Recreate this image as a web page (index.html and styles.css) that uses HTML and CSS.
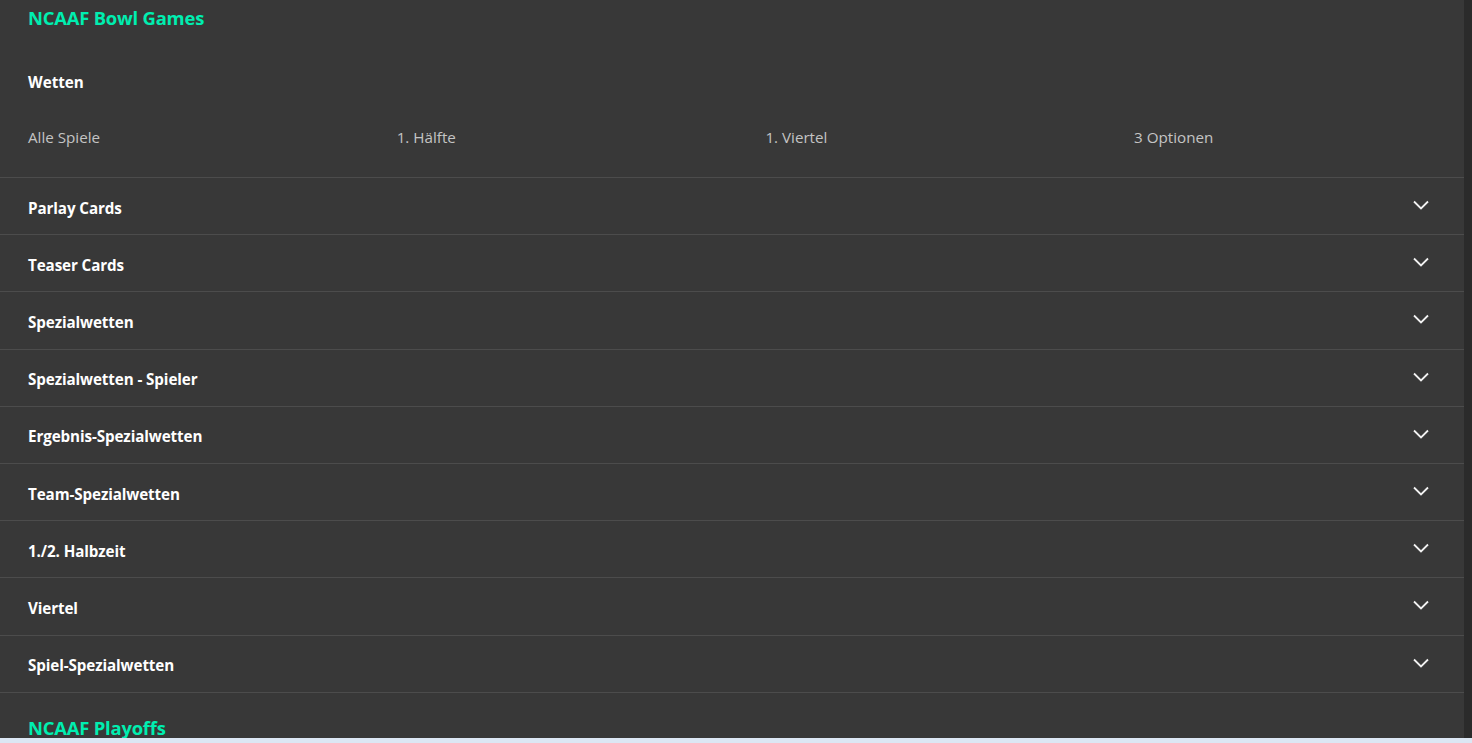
FILE: index.html
```html
<!DOCTYPE html>
<html lang="de">
<head>
  <meta charset="UTF-8" />
  <title>NCAAF Wetten</title>
  <meta name="viewport" content="width=device-width, initial-scale=1.0" />
  <link rel="stylesheet" href="styles.css">
</head>
<body>

<div class="window">
  <div class="viewport">
    <div class="content">
      <!-- Bowl Games -->
      <section class="league">
        <h2 class="league-title">NCAAF Bowl Games</h2>
        <h3 class="bets-title">Wetten</h3>
        <div class="tabs">
          <span>Alle Spiele</span>
          <span>1. Hälfte</span>
          <span>1. Viertel</span>
          <span>3 Optionen</span>
        </div>

        <ul class="markets">
          <li class="market"><span>Parlay Cards</span><svg class="chevron" viewBox="0 0 16 10"><path d="M1 1.5 L8 8.5 L15 1.5" /></svg></li>
          <li class="market"><span>Teaser Cards</span><svg class="chevron" viewBox="0 0 16 10"><path d="M1 1.5 L8 8.5 L15 1.5" /></svg></li>
          <li class="market"><span>Spezialwetten</span><svg class="chevron" viewBox="0 0 16 10"><path d="M1 1.5 L8 8.5 L15 1.5" /></svg></li>
          <li class="market"><span>Spezialwetten - Spieler</span><svg class="chevron" viewBox="0 0 16 10"><path d="M1 1.5 L8 8.5 L15 1.5" /></svg></li>
          <li class="market"><span>Ergebnis-Spezialwetten</span><svg class="chevron" viewBox="0 0 16 10"><path d="M1 1.5 L8 8.5 L15 1.5" /></svg></li>
          <li class="market"><span>Team-Spezialwetten</span><svg class="chevron" viewBox="0 0 16 10"><path d="M1 1.5 L8 8.5 L15 1.5" /></svg></li>
          <li class="market"><span>1./2. Halbzeit</span><svg class="chevron" viewBox="0 0 16 10"><path d="M1 1.5 L8 8.5 L15 1.5" /></svg></li>
          <li class="market"><span>Viertel</span><svg class="chevron" viewBox="0 0 16 10"><path d="M1 1.5 L8 8.5 L15 1.5" /></svg></li>
          <li class="market"><span>Spiel-Spezialwetten</span><svg class="chevron" viewBox="0 0 16 10"><path d="M1 1.5 L8 8.5 L15 1.5" /></svg></li>
        </ul>
      </section>

      <!-- Playoffs -->
      <section class="league">
        <h2 class="league-title next">NCAAF Playoffs</h2>
      </section>
    </div>
    <div class="scrollbar"></div>
  </div>
  <div class="status-strip"></div>
</div>

</body>
</html>
```

FILE: styles.css
```css
html, body {
  margin: 0;
  padding: 0;
  height: 100%;
  overflow: hidden;
}

body {
  font-family: 'Open Sans', 'Liberation Sans', sans-serif;
  background-color: #383838;
  color: #fff;
}

.window {
  display: flex;
  flex-direction: column;
  height: 743px;
}

.viewport {
  display: flex;
  height: 738px;
  overflow: hidden;
}

.content {
  flex: 1;
  background-color: #383838;
  overflow: hidden;
}

.scrollbar {
  width: 8px;
  background-color: #2b2b2b;
}

.status-strip {
  height: 5px;
  background-color: #dce7f4;
}

/* League block */
.league-title {
  margin: 0;
  padding: 6px 0 0 28px;
  height: 30px;
  font-size: 18.4px;
  font-weight: 700;
  line-height: 24px;
  color: #00eeb0;
  letter-spacing: -0.2px;
}

.league-title.next {
  padding-top: 23px;
}

.bets-title {
  margin: 0;
  padding: 35px 0 0 28px;
  font-size: 15.2px;
  font-weight: 700;
  line-height: 22px;
}

.tabs {
  display: grid;
  grid-template-columns: repeat(4, 368.7px);
  padding: 33px 0 0 28px;
  height: 51px;
  font-size: 15.2px;
  line-height: 22px;
  color: #c4c4c4;
}

/* Collapsible markets */
.markets {
  list-style: none;
  margin: 0;
  padding: 0;
  border-top: 1px solid #4c4c4c;
}

.market {
  display: flex;
  align-items: center;
  justify-content: space-between;
  height: 56.2px;
  padding: 0 35px 0 28px;
  border-bottom: 1px solid #4c4c4c;
  font-size: 15.2px;
  font-weight: 700;
  letter-spacing: -0.1px;
}

.market span {
  padding-top: 3px;
}

.chevron {
  width: 16px;
  height: 10px;
  margin-top: -2px;
  fill: none;
  stroke: #f2f2f2;
  stroke-width: 1.8;
}
```
